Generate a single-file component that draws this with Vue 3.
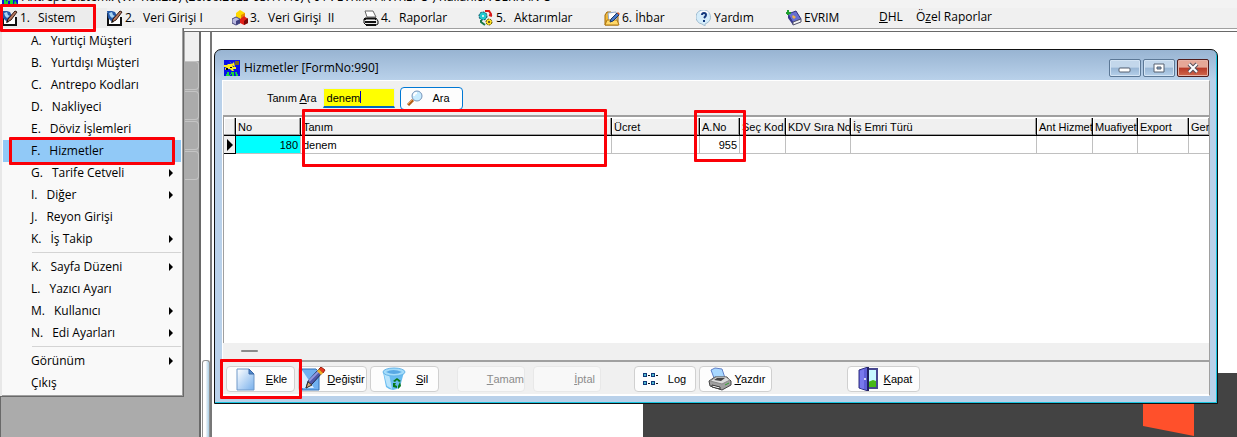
<script setup>
import { ref } from 'vue'

const search = ref('denem')

const menuItems = [
  { icon: 'pen', no: '1.', text: 'Sistem', active: true },
  { icon: 'pen', no: '2.', text: 'Veri Girişi I' },
  { icon: 'cubes', no: '3.', text: 'Veri Girişi  II' },
  { icon: 'printer', no: '4.', text: 'Raporlar' },
  { icon: 'gears', no: '5.', text: 'Aktarımlar' },
  { icon: 'folder', text: '6. İhbar' },
  { icon: 'help', text: 'Yardım' },
  { icon: 'book', text: 'EVRIM' }
]

const systemMenu = [
  [
    { no: 'A.', text: 'Yurtiçi Müşteri' },
    { no: 'B.', text: 'Yurtdışı Müşteri' },
    { no: 'C.', text: 'Antrepo Kodları' },
    { no: 'D.', text: 'Nakliyeci' },
    { no: 'E.', text: 'Döviz İşlemleri' },
    { no: 'F.', text: 'Hizmetler', selected: true },
    { no: 'G.', text: 'Tarife Cetveli', sub: true },
    { no: 'I.', text: 'Diğer', sub: true },
    { no: 'J.', text: 'Reyon Girişi' },
    { no: 'K.', text: 'İş Takip', sub: true }
  ],
  [
    { no: 'K.', text: 'Sayfa Düzeni', sub: true },
    { no: 'L.', text: 'Yazıcı Ayarı' },
    { no: 'M.', text: 'Kullanıcı', sub: true },
    { no: 'N.', text: 'Edi Ayarları', sub: true }
  ],
  [
    { text: 'Görünüm', sub: true },
    { text: 'Çıkış' }
  ]
]

const columns = [
  { key: 'no', label: 'No' },
  { key: 'tanim', label: 'Tanım' },
  { key: 'ucret', label: 'Ücret' },
  { key: 'ano', label: 'A.No' },
  { key: 'sec', label: 'Seç Kod' },
  { key: 'kdv', label: 'KDV Sıra No' },
  { key: 'emir', label: 'İş Emri Türü' },
  { key: 'ant', label: 'Ant Hizmet' },
  { key: 'muaf', label: 'Muafiyet' },
  { key: 'export', label: 'Export' },
  { key: 'ger', label: 'Ger' }
]

const rows = [{ no: 180, tanim: 'denem', ano: 955 }]
</script>

<template>
  <div class="app">
    <header class="titlebar">
      <svg class="app-icon" viewBox="0 0 16 16">
        <rect width="16" height="16" fill="#0a10e0" />
        <path d="M1 6h4l2-4 3 2v4l4 3H9l-2 2-3-3H1z" fill="#ffee20" />
        <path d="M2 16v-4h2v2l2-3v5zM8 16v-4h3v4zM12 16l1-4 2 4z" fill="#20d830" />
      </svg>
      <span>Antrepo Sistemi: (V.7 Rel:2.5) (26.06.2023 03:17:40) ( 01 : EVRIM ANTREPO ) Kullanıcı : SERKAN O</span>
    </header>

    <nav class="menubar">
      <button v-for="item in menuItems" :key="item.text" type="button" class="menu-item" :class="{ active: item.active }">
        <svg class="icon16" viewBox="0 0 16 16">
          <template v-if="item.icon === 'pen'">
            <path d="M1 3v12h13V7" fill="#fff" stroke="#111" stroke-width="2" />
            <path d="M0 1h5l3 1 2 4-2 4-4 1-3-3z" fill="#2458a8" />
            <path d="M2 3l3-1 1 3 2 1-3 2-2-2z" fill="#a8d4f4" />
            <path d="M5 12l1-3 7-8 2 1-6 8z" fill="#b87860" stroke="#321810" />
            <path d="M4 13l1-3 2 2z" fill="#111" />
          </template>
          <template v-else-if="item.icon === 'cubes'">
            <path d="M8 0l5 3v4L9 9 4 7V3z" fill="#ffd800" />
            <path d="M9 5l4-2v4L9 9z" fill="#e88800" />
            <path d="M0 9l4-2 4 2v4l-4 2-4-2z" fill="#b8b8e0" stroke="#444478" />
            <path d="M4 11l4-2v4l-4 2z" fill="#404080" />
            <path d="M8 9l4-3 4 3v4l-4 2-4-2z" fill="#e02018" />
            <path d="M12 11l4-3v5l-4 2z" fill="#780808" />
          </template>
          <template v-else-if="item.icon === 'printer'">
            <path d="M4 7L2 1h8l3 6z" fill="#fff" stroke="#666" />
            <path d="M2 8h11l2 3v3l-2 1H3l-2-2v-4z" fill="#e8e8e8" stroke="#111" />
            <path d="M1 9h12M2 12h11M3 15h10" stroke="#111" stroke-width="2" />
            <path d="M3 10h9" stroke="#fff" />
          </template>
          <template v-else-if="item.icon === 'gears'">
            <circle cx="5" cy="6" r="4" fill="#20c8d0" stroke="#154858" stroke-dasharray="2 1" />
            <circle cx="5" cy="6" r="1" fill="#fff" />
            <path d="M7 1h4l2 3v2M11 5l3 1" fill="none" stroke="#d81818" stroke-width="2" />
            <circle cx="11" cy="12" r="3" fill="#ffe020" stroke="#5a4c00" stroke-dasharray="2 1" />
            <circle cx="11" cy="12" r="1" fill="#333" />
            <path d="M3 10v2l4 3" fill="none" stroke="#187848" stroke-width="2" />
          </template>
          <template v-else-if="item.icon === 'folder'">
            <path d="M1 5l2-3h4l1 2h6v11H1z" fill="#f0b838" stroke="#a06808" />
            <path d="M4 3l8-1 1 9-8 1z" fill="#fff" stroke="#90a8c8" />
            <path d="M1 15l2-5h10l2 5z" fill="#ffd868" stroke="#b07810" />
            <path d="M6 12l1-3 6-6 2 2-6 6z" fill="#4878c8" stroke="#183868" />
            <path d="M13 3l1-1 2 2-1 1z" fill="#e06030" />
          </template>
          <template v-else-if="item.icon === 'help'">
            <path d="M8 0a7 7 0 0 1 3 13l-2 1v2l-3-2A7 7 0 0 1 8 0z" fill="#d4ecfa" stroke="#a0bcd0" />
            <path d="M4 3q4-3 8 0" fill="none" stroke="#fff" stroke-width="2" />
            <path d="M6 5q0-2 2-2t2 2q0 1-2 3M8 10v2" fill="none" stroke="#12387c" stroke-width="2" />
          </template>
          <template v-else>
            <path d="M2 4l8-3 5 8-8 4z" fill="#6870d0" stroke="#303080" />
            <path d="M2 4v4l5 7v-3z" fill="#383890" />
            <path d="M7 12l8-3v3l-8 3z" fill="#f4f4f4" stroke="#505068" />
            <path d="M7 5l3 2-2 2-2-2z" fill="#f0b048" />
            <path d="M0 3h5M2 0v5" stroke="#20a030" stroke-width="2" />
          </template>
        </svg>
        <span v-if="item.no" class="item-no">{{ item.no }}</span>
        <span class="item-text">{{ item.text }}</span>
      </button>
      <button type="button" class="menu-item plain"><u>D</u>HL</button>
      <button type="button" class="menu-item plain">Ö<u>z</u>el Raporlar</button>
      <span class="mark mark-system"></span>
    </nav>

    <div class="workspace">
      <aside class="side-panel">
        <div class="side-head"></div>
        <div v-for="n in 4" :key="n" class="side-slot"></div>
      </aside>
      <div class="splitter"><div class="thumb"></div></div>

      <main class="mdi">
        <div class="banner">
          <svg class="banner-shape" viewBox="0 0 51 64"><path d="M0 0h51v63L0 53z" fill="#ff502b" /></svg>
        </div>

        <section class="window">
          <div class="caption">
            <svg class="icon16" viewBox="0 0 16 16">
              <rect width="16" height="16" fill="#0810e8" />
              <path d="M0 5h3l1-1h4l1 3h3v2H9l1 2H8L6 9H3L1 10V8l2-1H0z" fill="#ffee20" />
              <path d="M5 1l3 3 2-2 1 5-3-2z" fill="#ffee20" />
              <path d="M11 1h4v4h-4z" fill="#786820" />
              <path d="M2 8h2v2H2zM6 7h2v1H6z" fill="#000" />
              <path d="M2 16v-2h1v-2h2v3h2v-3h3v4H8v-2H6v2zM11 12h2v2h1v2h-2z" fill="#18d838" />
            </svg>
            <h1>Hizmetler [FormNo:990]</h1>
            <button type="button" class="win-btn" aria-label="Simge durumuna küçült">
              <svg viewBox="0 0 30 16"><rect x="9" y="8" width="11" height="4" rx="1" fill="#fff" stroke="#566070" /></svg>
            </button>
            <button type="button" class="win-btn" aria-label="Ekranı kapla">
              <svg viewBox="0 0 30 16"><path d="M10 4h10v8H10z" fill="#fff" stroke="#566070" /><path d="M13 7h4v2h-4z" fill="#86a8cc" stroke="#566070" /></svg>
            </button>
            <button type="button" class="win-btn close" aria-label="Kapat">
              <svg viewBox="0 0 30 16"><path d="M11 4l8 8M19 4l-8 8" stroke="#59515c" stroke-width="4" /><path d="M11 4l8 8M19 4l-8 8" stroke="#fff" stroke-width="2" /></svg>
            </button>
          </div>

          <div class="client">
            <form class="search" @submit.prevent>
              <label for="search">Tanım <u>A</u>ra</label>
              <div class="search-box">
                <input id="search" v-model="search" type="text" />
                <span class="caret"></span>
              </div>
              <button type="submit" class="find">
                <svg class="icon16" viewBox="0 0 16 16">
                  <path d="M1 15l5-5" stroke="#b05c18" stroke-width="3" />
                  <path d="M1 14l4-4" stroke="#f0a050" />
                  <circle cx="10" cy="6" r="5" fill="#c8ecff" stroke="#7894b8" />
                  <path d="M7 6q0-3 3-3" fill="none" stroke="#fff" stroke-width="2" />
                </svg>
                <span>Ara</span>
              </button>
            </form>

            <div class="grid-area">
              <table>
                <colgroup>
                  <col class="c-mark" />
                  <col v-for="col in columns" :key="col.key" :class="'c-' + col.key" />
                </colgroup>
                <thead>
                  <tr>
                    <th></th>
                    <th v-for="col in columns" :key="col.key">{{ col.label }}</th>
                  </tr>
                </thead>
                <tbody>
                  <tr v-for="row in rows" :key="row.no">
                    <td class="row-mark"><svg viewBox="0 0 11 16"><path d="M3 2v12l6-6z" /></svg></td>
                    <td v-for="col in columns" :key="col.key" :class="{ num: col.key === 'no' || col.key === 'ano', current: col.key === 'no' }">{{ row[col.key] }}</td>
                  </tr>
                </tbody>
              </table>
            </div>
            <div class="hscroll"><span></span></div>

            <div class="toolbar">
              <button type="button" class="tool add">
                <svg viewBox="0 0 24 24">
                  <defs><linearGradient id="page" x1="0" y1="0" x2="1" y2="1"><stop offset="0" stop-color="#fff" /><stop offset="1" stop-color="#78b0ec" /></linearGradient></defs>
                  <path d="M2 2h12l5 5v16H2z" fill="url(#page)" stroke="#6f98c8" />
                  <path d="M14 2v5h5z" fill="#5088c8" stroke="#3a68a8" />
                </svg>
                <span><u>E</u>kle</span>
              </button>
              <button type="button" class="tool edit">
                <svg viewBox="0 0 24 24">
                  <path d="M0 2h14l3 3v18H0z" fill="#70b0f0" stroke="#3070b8" />
                  <path d="M0 3l12 18H0z" fill="#d8ecff" />
                  <path d="M4 21l2-7L17 2l4 3L10 17z" fill="#5058a8" stroke="#202850" />
                  <path d="M7 14L18 3" stroke="#9098e0" stroke-width="2" />
                  <path d="M4 21l2-6 4 3z" fill="#d8a878" stroke="#333" />
                  <path d="M17 2l2-2 4 3-2 3z" fill="#e83820" stroke="#982010" />
                  <path d="M15 4l2-2 4 4-2 2z" fill="#f0b028" />
                </svg>
                <span><u>D</u>eğiştir</span>
              </button>
              <button type="button" class="tool remove">
                <svg viewBox="0 0 24 24">
                  <path d="M1 5l3 15q7 6 14 0l4-15z" fill="#68bcf0" />
                  <path d="M2 7l3 12 5 3L7 7z" fill="#b8e4fc" />
                  <ellipse cx="12" cy="5" rx="11" ry="4" fill="#a4dcfa" stroke="#64b4e8" />
                  <path d="M4 5q7-4 16 0-8 4-16 0z" fill="#58a8e4" />
                  <path d="M11 14l4-3 4 3-2 1-2-2-2 2zM11 16h3l-1 2 2 1v2l-4-1zM18 15l1 4-3 3v-3z" fill="#087818" />
                </svg>
                <span><u>S</u>il</span>
              </button>
              <button type="button" class="tool text-only tamam" disabled><u>T</u>amam</button>
              <button type="button" class="tool text-only iptal" disabled><u>İ</u>ptal</button>
              <button type="button" class="tool log">
                <svg viewBox="0 0 24 24">
                  <path d="M0 6h4v4H0zM8 6h4v4H8zM0 14h4v4H0zM8 14h4v4H8z" fill="#103878" />
                  <path d="M1 7h2v2H1zM9 7h2v2H9zM1 15h2v2H1zM9 15h2v2H9z" fill="#50b8d0" />
                  <path d="M5 8h2v1H5zM13 8h2v1h-2zM5 16h2v1H5zM13 16h2v1h-2z" fill="#111" />
                </svg>
                <span>Log</span>
              </button>
              <button type="button" class="tool wide">
                <svg viewBox="0 0 24 24">
                  <path d="M6 11L3 3l4-2 7 1 3 9z" fill="#a8d8ff" stroke="#6080c8" />
                  <path d="M1 14l6-4h12l4 4v4l-9 5-12-4z" fill="#a0a0a0" stroke="#444" />
                  <path d="M2 14l6-4h10l4 3-8 4z" fill="#dcdcdc" stroke="#888" />
                  <path d="M6 13l3-2h8l-4 3z" fill="#444" />
                  <path d="M4 18l8 2v2l-8-2z" fill="#fff" stroke="#333" />
                  <path d="M17 18l4-2" stroke="#30a030" />
                </svg>
                <span><u>Y</u>azdır</span>
              </button>
              <button type="button" class="tool wide exit">
                <svg viewBox="0 0 24 24">
                  <path d="M12 2h9v19h-9z" fill="#c8f8ff" stroke="#484890" stroke-width="2" />
                  <path d="M12 15l5-2 3 1v6h-8z" fill="#48b818" />
                  <path d="M3 3l9-3v24l-9-3z" fill="#6060d8" stroke="#303080" />
                  <path d="M4 4l4-2v20l-4-1z" fill="#7878ec" />
                  <path d="M12 0v24" stroke="#202060" stroke-width="2" />
                  <circle cx="9" cy="12" r="1" fill="#fff" />
                </svg>
                <span><u>K</u>apat</span>
              </button>
            </div>
          </div>

          <span class="mark mark-name"></span>
          <span class="mark mark-code"></span>
          <span class="mark mark-add"></span>
        </section>
      </main>
    </div>

    <div class="dropdown">
      <ul v-for="(group, i) in systemMenu" :key="i">
        <li v-for="item in group" :key="item.text">
          <button type="button" class="drop-item" :class="{ selected: item.selected }">
            <span v-if="item.no">{{ item.no }}</span>
            <span>{{ item.text }}</span>
            <svg v-if="item.sub" class="arrow" viewBox="0 0 4 8"><path d="M0 0v8l4-4z" /></svg>
            <span v-if="item.selected" class="mark mark-item"></span>
          </button>
        </li>
      </ul>
    </div>
  </div>
</template>

<style>
html,
body,
#app {
  height: 100%;
  margin: 0;
}
</style>

<style scoped>
* {
  box-sizing: border-box;
}

.app {
  position: relative;
  display: flex;
  flex-direction: column;
  height: 100%;
  overflow: hidden;
  background: #f0f0f0;
  font: 12px/16px "Open Sans", "Noto Sans", sans-serif;
  color: #000;
}

button {
  margin: 0;
  padding: 0;
  border: 0;
  background: none;
  font: inherit;
  color: inherit;
  white-space: pre;
}

svg {
  display: block;
  flex: none;
}

.icon16 {
  width: 16px;
  height: 16px;
}

.titlebar {
  display: flex;
  align-items: flex-end;
  gap: 4px;
  height: 8px;
  padding: 0 2px 4px;
  overflow: hidden;
  background: #f3f3f3;
  line-height: 14px;
  white-space: nowrap;
}

.app-icon {
  width: 16px;
  height: 16px;
}

.menubar {
  position: relative;
  z-index: 3;
  display: grid;
  grid-template-columns: 105px 125px 131px 115px 126px 92px 90px 93px 37px auto;
  justify-content: start;
  flex: none;
  height: 20px;
  padding-left: 2px;
}

.menu-item {
  display: flex;
  align-items: center;
  gap: 2px;
}

.menu-item.active {
  background: #ececec;
}

.menu-item.plain {
  gap: 0;
  padding-bottom: 2px;
}

.item-no + .item-text {
  margin-left: 6px;
}

.mark {
  position: absolute;
  border: 3px solid #fb0007;
  border-radius: 1px;
  pointer-events: none;
}

.mark-system {
  left: 0;
  top: -4px;
  width: 96px;
  height: 28px;
}

.workspace {
  display: flex;
  flex: 1;
  min-height: 0;
  border-top: 1px solid #a0a0a0;
  padding-top: 2px;
  background: #fff;
}

.side-panel {
  flex: none;
  width: 201px;
  padding-left: 184px;
  border: 2px solid #696969;
  border-width: 1px 2px 0 1px;
  background: #ababab;
}

.side-head {
  height: 29px;
  background: #f0f0f0;
}

.side-slot {
  height: 29px;
  margin-bottom: 1px;
  border: 1px solid #c4c4c4;
  border-left: 0;
  border-radius: 0 4px 4px 0;
}

.splitter {
  display: flex;
  flex-direction: column;
  justify-content: flex-end;
  flex: none;
  width: 9px;
  padding-left: 1px;
  border-top: 1px solid #696969;
}

.thumb {
  height: 77px;
  border: 1px solid #909090;
  border-bottom: 0;
  border-radius: 3px 3px 0 0;
  background: linear-gradient(90deg, #fff 40%, #a8cce4);
}

.mdi {
  position: relative;
  flex: 1;
  border-top: 1px solid #696969;
  border-left: 2px solid #777;
  background: #fff;
}

.banner {
  position: absolute;
  left: 431px;
  right: 0;
  bottom: 0;
  height: 64px;
  background: #434343;
}

.banner-shape {
  width: 51px;
  height: 64px;
  margin-left: 500px;
}

.window {
  position: absolute;
  left: 2px;
  right: 19px;
  top: 17px;
  bottom: 33px;
  display: flex;
  flex-direction: column;
  padding: 0 7px;
  border: 1px solid #111;
  border-radius: 7px 7px 0 0;
  background: linear-gradient(#98b4d2, #b9d1ea 30px);
  box-shadow: inset -1px -1px #18c4e0;
}

.caption {
  display: flex;
  align-items: center;
  gap: 2px;
  flex: none;
  height: 30px;
  padding: 6px 1px 0 2px;
}

.caption h1 {
  flex: 1;
  margin: 0 0 0 2px;
  font-size: 12px;
  font-weight: 400;
}

.win-btn {
  width: 32px;
  height: 18px;
  border: 1px solid #5c7896;
  border-radius: 2px;
  background: linear-gradient(#c3d7eb 45%, #98b6d5 50%, #b6d0ea);
  box-shadow: inset 0 0 0 1px #d4e4f4;
}

.win-btn.close {
  border-color: #501c1c;
  background: linear-gradient(#e6a898 45%, #b83a28 50%, #d0684c);
  box-shadow: inset 0 0 0 1px #e8b4a8;
}

.client {
  display: flex;
  flex-direction: column;
  flex: 1;
  min-height: 0;
  margin-bottom: 7px;
  border: 1px solid #fff;
  border-right-color: #a0a0a0;
  background: #f0f0f0;
  font: 11px/14px "Liberation Sans", Arial, sans-serif;
}

.search {
  display: flex;
  align-items: center;
  flex: none;
  height: 36px;
  padding-left: 44px;
  border-bottom: 2px solid #a0a0a0;
}

.search-box {
  position: relative;
  margin: 0 5px 0 6px;
}

.search-box input {
  display: block;
  width: 72px;
  height: 20px;
  padding: 0 3px;
  border: 1px solid #e4ecf4;
  border-bottom: 2px solid #0067c0;
  outline: 0;
  background: #ff0;
  font: inherit;
}

.caret {
  position: absolute;
  left: 37px;
  top: 3px;
  width: 1px;
  height: 12px;
  background: #0000c0;
}

.find {
  display: flex;
  align-items: center;
  gap: 10px;
  width: 63px;
  height: 23px;
  padding-left: 6px;
  border: 1px solid #0078d4;
  border-radius: 4px;
  background: #fdfdfd;
}

.grid-area {
  flex: 1;
  min-height: 0;
  padding-top: 1px;
  border-left: 1px solid #a0a0a0;
  overflow: hidden;
  background: #fff;
}

table {
  width: 100%;
  table-layout: fixed;
  border-spacing: 0;
}

.c-mark { width: 12px; }
.c-no { width: 65px; }
.c-tanim { width: 311px; }
.c-ucret { width: 88px; }
.c-ano { width: 40px; }
.c-sec { width: 46px; }
.c-kdv { width: 65px; }
.c-ant { width: 56px; }
.c-muaf { width: 45px; }
.c-export { width: 51px; }
.c-ger { width: 20px; }

th,
td {
  height: 18px;
  padding: 0 0 0 2px;
  overflow: hidden;
  font-weight: 400;
  text-align: left;
  white-space: nowrap;
}

th {
  border-right: 1px solid #000;
  border-bottom: 1px solid #000;
  background: #f0f0f0;
  box-shadow: inset -1px -1px #a0a0a0, inset 1px 1px #fff;
}

td {
  border-right: 1px solid #c0c0c0;
  border-bottom: 1px solid #c0c0c0;
}

th:last-child,
td:last-child {
  border-right: 0;
}

td.num {
  padding-right: 2px;
  text-align: right;
}

td.current {
  background: #0ff;
}

.row-mark {
  padding: 0;
  border-color: #000;
  background: #f0f0f0;
}

.row-mark svg {
  width: 11px;
  height: 16px;
}

.hscroll {
  flex: none;
  height: 17px;
  padding: 7px 18px 0;
}

.hscroll span {
  display: block;
  width: 17px;
  height: 2px;
  border-radius: 1px;
  background: #8a8a8a;
}

.toolbar {
  display: flex;
  align-items: center;
  gap: 3px;
  flex: none;
  height: 35px;
  padding: 2px 0 0 3px;
  border-top: 2px solid #a0a0a0;
  border-bottom: 1px solid #fff;
}

.tool {
  display: flex;
  align-items: center;
  flex: none;
  width: 69px;
  height: 26px;
  padding: 0 3px 0 8px;
  border: 1px solid #d0d0d0;
  border-radius: 4px;
  background: #fdfdfd;
}

.tool svg {
  width: 24px;
  height: 24px;
}

.tool span {
  flex: 1;
  text-align: center;
}

.tool.add {
  padding-right: 0;
}

.tool.edit {
  padding: 0 0 0 3px;
}

.tool.remove {
  padding: 0 0 0 11px;
}

.tool.text-only {
  justify-content: flex-end;
  width: 68px;
  padding: 0;
  border-color: #e8e8e8;
  background: #f8f8f8;
  color: #8c8c8c;
}

.tool.tamam {
  margin-left: 15px;
}

.tool.iptal {
  margin-left: 5px;
  padding-right: 5px;
}

.tool.log {
  width: 62px;
  margin-left: 30px;
  padding-right: 8px;
}

.tool.wide {
  width: 73px;
}

.tool.exit {
  margin-left: 72px;
}

.mark-name {
  left: 87px;
  top: 59px;
  width: 305px;
  height: 58px;
}

.mark-code {
  left: 479px;
  top: 60px;
  width: 52px;
  height: 52px;
}

.mark-add {
  left: 5px;
  bottom: 4px;
  width: 82px;
  height: 40px;
}

.dropdown {
  position: absolute;
  z-index: 2;
  left: 0;
  top: 28px;
  width: 184px;
  padding: 2px 1px;
  border: 1px solid #696969;
  border-width: 0 1px 1px 0;
  background: #f9f9f9;
  box-shadow: inset 2px 0 #e8e8e8, inset -1px -1px #a0a0a0;
}

.dropdown ul {
  margin: 0;
  padding: 0 1px 0 2px;
  list-style: none;
}

.dropdown ul + ul::before {
  content: '';
  display: block;
  height: 1px;
  margin: 2px 0 3px 29px;
  background: #d4d4d4;
}

.drop-item {
  position: relative;
  display: flex;
  align-items: center;
  gap: 9px;
  width: 100%;
  height: 22px;
  padding: 0 8px 0 28px;
}

.drop-item.selected {
  background: #91c9f7;
}

.arrow {
  width: 4px;
  height: 8px;
  margin-left: auto;
}

.mark-item {
  left: 6px;
  top: -3px;
  width: 166px;
  height: 28px;
}
</style>
